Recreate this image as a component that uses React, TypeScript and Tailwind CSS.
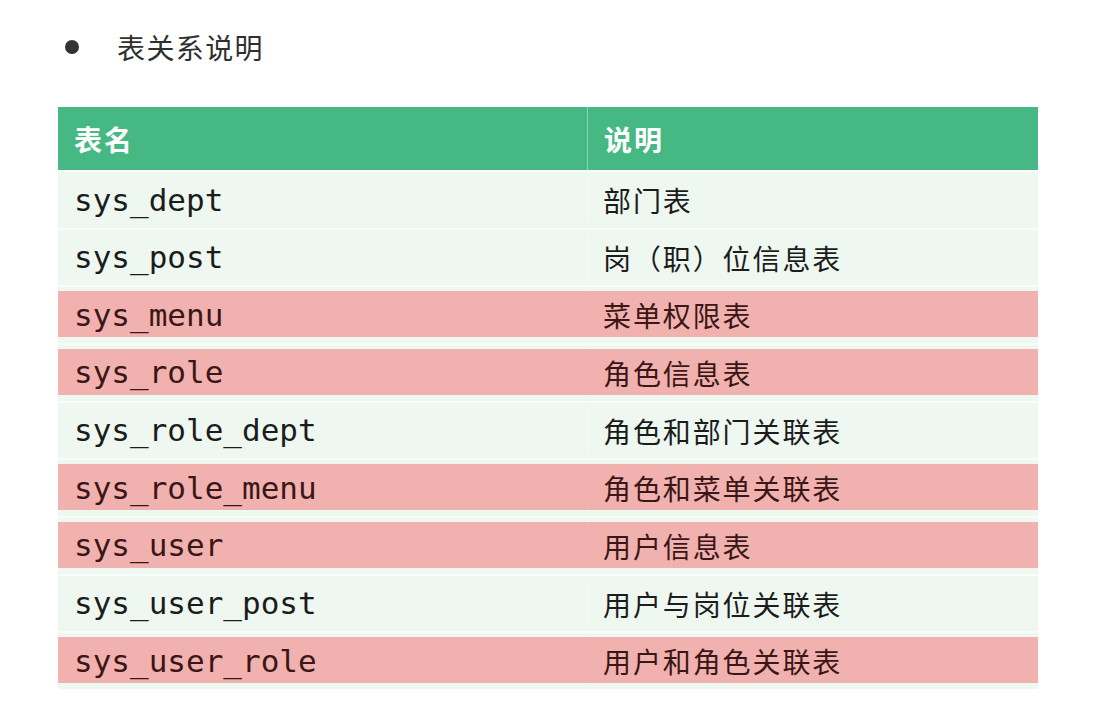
const rows: { name: string; desc: string; hot: boolean }[] = [
  { name: "sys_dept", desc: "部门表", hot: false },
  { name: "sys_post", desc: "岗（职）位信息表", hot: false },
  { name: "sys_menu", desc: "菜单权限表", hot: true },
  { name: "sys_role", desc: "角色信息表", hot: true },
  { name: "sys_role_dept", desc: "角色和部门关联表", hot: false },
  { name: "sys_role_menu", desc: "角色和菜单关联表", hot: true },
  { name: "sys_user", desc: "用户信息表", hot: true },
  { name: "sys_user_post", desc: "用户与岗位关联表", hot: false },
  { name: "sys_user_role", desc: "用户和角色关联表", hot: true },
];

const cjk = "font-['Noto_Sans_CJK_SC','Noto_Sans',sans-serif]";
const mono = "font-['DejaVu_Sans_Mono','Liberation_Mono','Noto_Sans_CJK_SC',monospace]";

export default function App() {
  return (
    <div className="min-h-[715px] w-[1111px] bg-white">
      <div className="flex items-center pt-[27px] pl-[65px]">
        <span className="h-[14px] w-[14px] rounded-full bg-[#333333]" />
        <span className={`ml-[38px] text-[28px] leading-[40px] tracking-[1.4px] text-[#2f2f2f] ${cjk}`}>
          表关系说明
        </span>
      </div>

      <div className="ml-[58px] mt-[40px] w-[980px]">
        <div className="flex h-[63px] bg-[#45b883] text-white">
          <div className={`flex w-[529px] items-center pl-[16px] text-[28px] font-bold tracking-[2px] ${cjk}`}>
            表名
          </div>
          <div className="w-px bg-[#8ed4b1]" />
          <div className={`flex flex-1 items-center pl-[16px] text-[28px] font-bold tracking-[2px] ${cjk}`}>
            说明
          </div>
        </div>

        {rows.map((r) => (
          <div
            key={r.name}
            className="h-[57.67px] border-t-2 border-[#f7fdf9] bg-[#eef8f1]"
          >
            <div
              className={`mt-[4px] flex h-[46px] items-center ${
                r.hot ? "bg-[#f1b1ae] text-[#3a1616]" : "text-[#1c1c1c]"
              }`}
            >
              <div className={`w-[529px] pl-[16px] pt-[2px] text-[31px] leading-none ${mono}`}>
                {r.name}
              </div>
              <div className={`h-full w-px ${r.hot ? "bg-[#f2b5b2]" : "bg-[#f3fbf5]"}`} />
              <div className={`flex-1 pl-[15px] pt-[2px] text-[28px] leading-none tracking-[1.9px] ${cjk}`}>
                {r.desc}
              </div>
            </div>
          </div>
        ))}
      </div>
    </div>
  );
}
